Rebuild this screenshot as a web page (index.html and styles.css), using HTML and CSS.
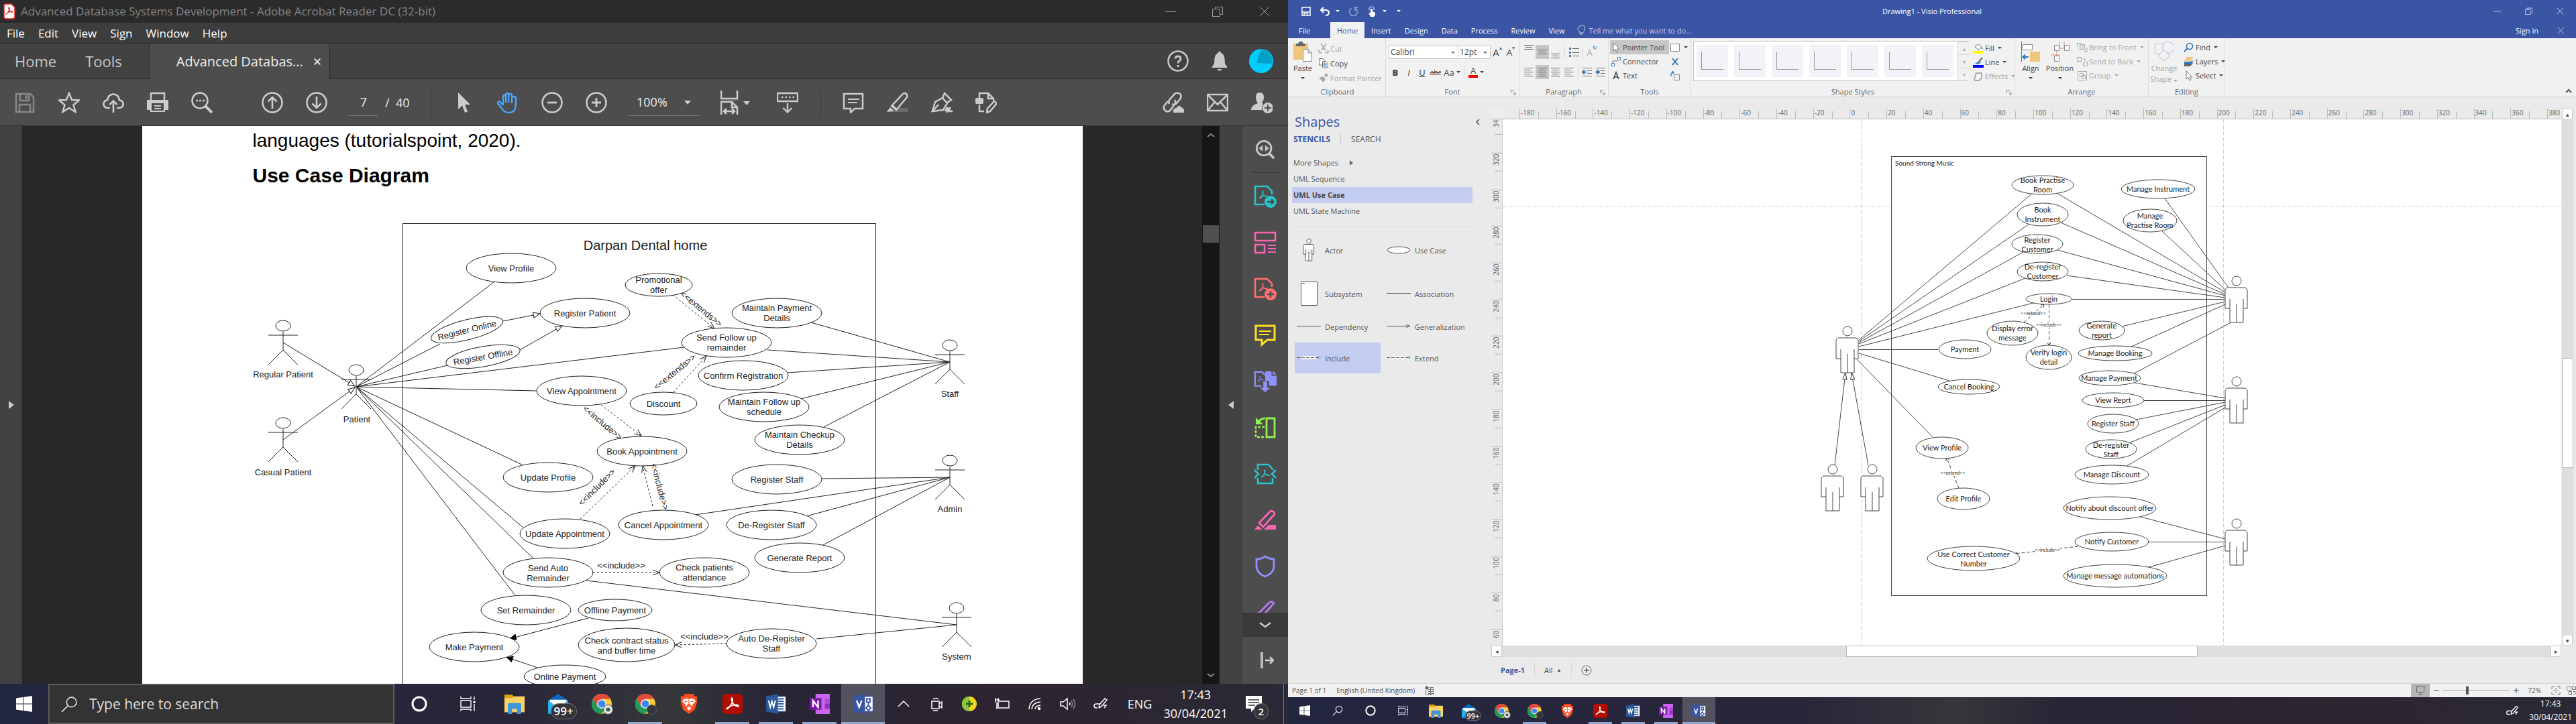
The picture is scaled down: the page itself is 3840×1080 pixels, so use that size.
FILE: index.html
```html
<!DOCTYPE html>
<html lang="en">
<head>
<meta charset="utf-8">
<title>Desktop</title>
<link rel="stylesheet" href="styles.css">
</head>
<body>
<svg class="sprite" aria-hidden="true">
  <defs>
    <marker id="open" viewBox="0 0 12 10" refX="11" refY="5" markerWidth="12" markerHeight="10" markerUnits="userSpaceOnUse" orient="auto"><path d="M1 1 11 5 1 9" fill="none" stroke="#222"/></marker>
    <marker id="hollow" viewBox="0 0 12 10" refX="11" refY="5" markerWidth="12" markerHeight="10" markerUnits="userSpaceOnUse" orient="auto"><path d="M1 1 11 5 1 9Z" fill="#fff" stroke="#222"/></marker>
    <marker id="solid" viewBox="0 0 12 10" refX="11" refY="5" markerWidth="12" markerHeight="10" markerUnits="userSpaceOnUse" orient="auto"><path d="M0 0 11 5 0 10Z" fill="#000"/></marker>
    <marker id="tri" viewBox="0 0 12 8" refX="11" refY="4" markerWidth="12" markerHeight="8" markerUnits="userSpaceOnUse" orient="auto"><path d="M1 1 11 4 1 7Z" fill="#fff" stroke="#333"/></marker>
    <marker id="dep" viewBox="0 0 6 6" refX="5" refY="3" markerWidth="6" markerHeight="6" markerUnits="userSpaceOnUse" orient="auto"><path d="M1 0 5 3 1 6" fill="none" stroke="#333"/></marker>
  </defs>
  <symbol id="stick" viewBox="-24 -9 48 68" overflow="visible"><ellipse rx="11" ry="8"/><path d="M0 9V36M-22 14H22M-22 58 0 36 22 58"/></symbol>
  <symbol id="person" viewBox="-17 -8 34 71" overflow="visible"><circle r="7"/><path d="M-10 41H-17V13L-14 10H13L16 13V41H10M-10 27V62H10V27M0 34V62"/></symbol>
  <symbol id="trefoil" viewBox="0 0 12 12"><path d="M1 10C3 8 6 6 6 2 6 0 4 1 5 3 6 6 8 8 11 8 12 7 9 6 5 8 3 9 2 11 1 10Z" fill="none" stroke="currentColor"/></symbol>
  <symbol id="i-win" viewBox="0 0 24 24"><path fill="#fff" d="M0 3.500 10 2V11.500H0ZM11 2 24 0V11.500H11ZM0 12.500H10V22L0 20.500ZM11 12.500H24V24L11 22Z"/></symbol>
  <symbol id="i-find" viewBox="0 0 24 24"><path fill="none" stroke="currentColor" stroke-width="1.600" d="M22 9A7 7 0 1 1 8 9 7 7 0 1 1 22 9ZM10 14 1 23"/></symbol>
  <symbol id="i-cortana" viewBox="0 0 24 24"><circle cx="12" cy="12" r="10" fill="none" stroke="#fff" stroke-width="3"/></symbol>
  <symbol id="i-task" viewBox="0 0 24 24"><path fill="none" stroke="#fff" stroke-width="1.400" d="M1 1V4H16V1M1 23V20H16V23M1 7H16V17H1ZM21 1V6M21 12V23"/><path fill="#fff" d="M19.500 8h3v3h-3z"/></symbol>
  <symbol id="i-folder" viewBox="0 0 24 24"><path fill="#e0a410" d="M0 1H9L11 3V7H0Z"/><path fill="#fbd263" d="M0 5H10L11 3H24V22H0Z"/><path fill="#3f96dc" d="M4 13Q4 11 6 11H18Q20 11 20 13V24H15V18H9V24H4Z"/></symbol>
  <symbol id="i-mail" viewBox="0 0 24 24"><path fill="#0a6cc0" d="M0 8 12 0 24 8V12H0Z"/><path fill="#fff" d="M2 7H22V14H2Z"/><path fill="#2bb0ee" d="M0 8 12 16 0 24ZM24 8 12 16 24 24Z"/><path fill="#1a8ddb" d="M0 24 12 15 24 24Z"/></symbol>
  <symbol id="i-chrome" viewBox="0 0 24 24"><circle cx="12" cy="12" r="12" fill="#fcc934"/><path fill="#e14b3d" d="M12 12V6H22.400A12 12 0 0 0 1.600 6L7 15Z"/><path fill="#1d9b57" d="M1.600 6A12 12 0 0 0 12 24L17 15 12 12 7 15Z"/><circle cx="12" cy="12" r="5.500" fill="#fff"/><circle cx="12" cy="12" r="4.400" fill="#4384f3"/></symbol>
  <symbol id="i-brave" viewBox="0 0 24 24"><path fill="#fb4b20" d="M7 0H17L19 3 22 3 21.500 7 22 9 19 19 12 24 5 19 2 9 2.500 7 2 3 5 3Z"/><path fill="#fff" d="M6 6 10 5.500 12 6.500 14 5.500 18 6 20 9 16 13 16.500 15 12 13 7.500 15 8 13 4 9Z"/><path fill="#fff" d="M12 15 15 17 12 20 9 17Z"/><path stroke="#fb4b20" fill="none" d="M6.500 9 10 9.500M17.500 9 14 9.500M12 7V12M10 12.500H14"/></symbol>
  <symbol id="i-acro" viewBox="0 0 24 24"><rect width="24" height="24" rx="4" fill="#b30b00"/><path fill="none" stroke="#fff" stroke-width="1.500" d="M5 18C8 17 13 10 12 6 11.500 4 10 5 11 8 12 12 15 15 19 15 20 13 15 12 9 15 6 16 4 18.500 5 18Z"/></symbol>
  <symbol id="i-word" viewBox="0 0 24 24"><path fill="#fff" stroke="#2b579a" d="M12 3H23.500V21H12Z"/><path stroke="#2b579a" stroke-width="1.500" d="M14 6H21M14 9H21M14 12H21M14 15H21M14 18H21"/><path fill="#2b579a" d="M0 3 14 0V24L0 21Z"/><path fill="none" stroke="#fff" stroke-width="1.600" d="M3 8 5 16 7 9 9 16 11 8"/></symbol>
  <symbol id="i-note" viewBox="0 0 24 24"><path fill="#ca64ea" d="M7 0H24V24H7Z"/><path fill="#ae4bd5" d="M18 6H24V12H18Z"/><path fill="#9332bf" d="M18 12H24V18H18Z"/><path fill="#7719aa" d="M0 5H14V19H0Z"/><path fill="none" stroke="#fff" stroke-width="1.800" d="M4 16V8L10 16V8"/></symbol>
  <symbol id="i-visio" viewBox="0 0 24 24"><path fill="#fff" stroke="#3955a3" d="M12 3H23.500V21H12Z"/><path fill="none" stroke="#3955a3" stroke-width="1.500" d="M16 6H20V10H16ZM18 10V14L15 17 18 20 21 17 18 14"/><path fill="#3955a3" d="M0 3 14 0V24L0 21Z"/><path fill="none" stroke="#fff" stroke-width="1.800" d="M4 8 7 16 10 8"/></symbol>
  <symbol id="i-pen" viewBox="0 0 24 24"><path fill="none" stroke="#fff" stroke-width="1.500" d="M9 18 10 13 18 4 21 6 13 16 9 18M10 12H5Q2 12 2 15 2 18 5 18H7M16 14H20L17 18"/></symbol>
  <symbol id="i-x" viewBox="0 0 16 16"><path fill="none" stroke="currentColor" d="M1 1 15 15M15 1 1 15"/></symbol>
  <symbol id="i-restore" viewBox="0 0 16 16"><path fill="none" stroke="currentColor" d="M.5 4.500H11.500V15.500H.5ZM4.500 4V1.500H15.500V12.500H12"/></symbol>
  <symbol id="i-min" viewBox="0 0 16 16"><path stroke="currentColor" d="M0 8.500H16"/></symbol>
  <symbol id="i-lines" viewBox="0 0 16 16"><path stroke="#777" d="M1 1.500H15M1 4.500H11M1 7.500H15M1 10.500H11M1 13.500H15"/></symbol>
  <symbol id="i-linesc" viewBox="0 0 16 16"><path stroke="#666" d="M1 1.500H15M3 4.500H13M1 7.500H15M3 10.500H13M1 13.500H15"/></symbol>
  <symbol id="i-three" viewBox="0 0 16 8"><path stroke="#666" d="M1 .5H15M3 3.500H13M1 6.500H15"/></symbol>
  <symbol id="i-pointer" viewBox="0 0 16 16"><path fill="#fff" stroke="#777" d="M4 1V13L7 10.500 9 15 11 14 9 10H13Z"/></symbol>
  <symbol id="i-launch" viewBox="0 0 8 8"><path fill="none" stroke="#888" d="M.5 5V.5H5M3 3 7 7M7 4V7H4"/></symbol>
</svg>

<section class="screen acro">
  <header class="a-title">
    <svg class="a-logo" viewBox="0 0 18 24"><path d="M3 1H12L17 6V20Q17 23 14 23H4Q1 23 1 20V3Q1 1 3 1Z" fill="#fff" stroke="#e1251b" stroke-width="1.500"/><path fill="none" stroke="#e1251b" stroke-width="1.300" d="M4 16C6 15 10 10 9 7 8 5 7 7 8.500 9.500 10 12 12 13.500 14 13 14 12 10 11.500 6.500 14 5 15 4 17 4 16Z"/></svg>
    <h1>Advanced Database Systems Development - Adobe Acrobat Reader DC (32-bit)</h1>
    <div class="a-win"><button aria-label="Minimise"><svg><use href="#i-min"/></svg></button><button aria-label="Restore"><svg><use href="#i-restore"/></svg></button><button aria-label="Close"><svg><use href="#i-x"/></svg></button></div>
  </header>
  <nav class="a-menu"><button>File</button><button>Edit</button><button>View</button><button>Sign</button><button>Window</button><button>Help</button></nav>
  <div class="a-tabs">
    <button>Home</button><button>Tools</button>
    <div class="a-tab"><button>Advanced Databas...</button><button aria-label="Close tab"><svg class="tab-x"><use href="#i-x"/></svg></button></div>
    <div class="a-account">
      <button aria-label="Help"><svg viewBox="0 0 32 32"><circle cx="16" cy="16" r="14.500" fill="none" stroke="currentColor" stroke-width="2.500"/><path fill="none" stroke="currentColor" stroke-width="2.800" d="M12 12.500Q12 9 16 9T20 12.500Q20 15 17 16.500 16 17 16 19.500M16 22V25"/></svg></button>
      <button aria-label="Notifications"><svg viewBox="0 0 32 32"><path fill="currentColor" d="M14 2H18V4Q23 6 23.500 12L24 20 28 26H4L8 20 8.500 12Q9 6 14 4ZM12 28H20L16 31Z"/></svg></button>
      <button aria-label="Account"><svg class="avatar" viewBox="0 0 36 36"><circle cx="18" cy="18" r="18" fill="#00cdff"/><path fill="#00a0c8" d="M18 0A18 18 0 0 1 34 22L11 21Z"/></svg></button>
    </div>
  </div>
  <div class="a-tools">
    <button aria-label="Save" disabled><svg viewBox="0 0 32 32"><path fill="none" stroke="#888" stroke-width="2.500" d="M3 3H24L29 8V30H3ZM9 3V13H22V3M8 30V19H24V30M18 5V11"/></svg></button>
    <button aria-label="Star"><svg viewBox="0 0 32 32"><path fill="none" stroke="currentColor" stroke-width="2.500" d="M16 2 20 12 31 12.500 22.500 19.500 25.500 30 16 24 6.500 30 9.500 19.500 1 12.500 12 12Z"/></svg></button>
    <button aria-label="Upload"><svg viewBox="0 0 32 32"><path fill="none" stroke="currentColor" stroke-width="2.600" d="M11 24H7Q1 23 1.500 17.500 2 13 7 12.500 8 4 16 3.500 24 4 25 12.500 30 13 30.500 17.500 31 23 25 24H21M16 31V14M10.500 19 16 13.500 21.500 19"/></svg></button>
    <button aria-label="Print"><svg viewBox="0 0 32 32"><path fill="none" stroke="currentColor" stroke-width="2.500" d="M6 12V2H26V12"/><path fill="currentColor" d="M0 12H32V27H27V30H5V27H0Z"/><path fill="#4d4d4d" d="M7 17H25V28H7Z"/><path stroke="currentColor" stroke-width="2" d="M11 21H21M11 25H21"/></svg></button>
    <button aria-label="Find"><svg viewBox="0 0 32 32"><circle cx="13" cy="13" r="11.500" fill="none" stroke="currentColor" stroke-width="2.500"/><path stroke="currentColor" stroke-width="4" d="M21 21 31 31"/><path stroke="currentColor" stroke-width="2.500" d="M7 13H10M12 13H15M17 13H20"/></svg></button>
    <button class="gap-l" aria-label="Previous page"><svg viewBox="0 0 32 32"><circle cx="16" cy="16" r="14.500" fill="none" stroke="currentColor" stroke-width="2.500"/><path fill="none" stroke="currentColor" stroke-width="2.600" d="M16 25V8M9.500 14.500 16 8 22.500 14.500"/></svg></button>
    <button aria-label="Next page"><svg viewBox="0 0 32 32"><circle cx="16" cy="16" r="14.500" fill="none" stroke="currentColor" stroke-width="2.500"/><path fill="none" stroke="currentColor" stroke-width="2.600" d="M16 7V24M9.500 17.500 16 24 22.500 17.500"/></svg></button>
    <label class="pageno"><input value="7" aria-label="Page number"><span>/&nbsp; 40</span></label>
    <i class="a-sep"></i>
    <button aria-label="Select"><svg viewBox="0 0 32 32"><path fill="currentColor" d="M8 1V26L14 20.500 18 31 22 29.500 18 19H26Z"/></svg></button>
    <button aria-label="Hand" class="hand"><svg viewBox="0 0 32 32"><path fill="none" stroke="currentColor" stroke-width="2.400" d="M9 20V7Q9 5 11 5T13 7V16 4Q13 2 15 2T17 4V16 5Q17 3 19.500 3T22 5V17 9Q22 7 25 7T28 9V18Q28 31 18 31 11 31 8 26L1 17Q1 14 4 14.500L9 20"/></svg></button>
    <button aria-label="Zoom out"><svg viewBox="0 0 32 32"><circle cx="16" cy="16" r="14.500" fill="none" stroke="currentColor" stroke-width="2.500"/><path stroke="currentColor" stroke-width="2.800" d="M9 16H23"/></svg></button>
    <button aria-label="Zoom in"><svg viewBox="0 0 32 32"><circle cx="16" cy="16" r="14.500" fill="none" stroke="currentColor" stroke-width="2.500"/><path stroke="currentColor" stroke-width="2.800" d="M9 16H23M16 9V23"/></svg></button>
    <label class="zoom"><select aria-label="Zoom"><option>100%</option></select></label>
    <button class="fitw" aria-label="Fit width"><svg viewBox="0 0 44 36"><path fill="none" stroke="currentColor" stroke-width="2.600" d="M1 0V12H25V0M1 36V17H17L25 25V36M17 17V25H25M5 31H21M9 27 5 31 9 35M17 27 21 31 17 35"/><path stroke="#777" stroke-width="2" d="M0 14H26"/><path fill="currentColor" d="M34 16H44L39 22Z"/></svg></button>
    <button class="scrollm" aria-label="Scroll"><svg viewBox="0 0 32 32"><path fill="none" stroke="currentColor" stroke-width="2.400" d="M1 2H31V14H1ZM16 17V30M9.500 24 16 30.500 22.500 24"/><path stroke="currentColor" stroke-width="2.500" stroke-dasharray="2.500 3" d="M7 8H26"/></svg></button>
    <i class="a-sep"></i>
    <button aria-label="Comment"><svg viewBox="0 0 32 32"><path fill="none" stroke="currentColor" stroke-width="2.500" d="M2 3H30V25H18L12 31V25H2Z"/><path stroke="currentColor" stroke-width="2" d="M8 11H25M8 16H22"/></svg></button>
    <button aria-label="Highlight"><svg viewBox="0 0 32 32"><path fill="#6b6b6b" d="M8 30 16 24H32V30Z"/><path fill="none" stroke="currentColor" stroke-width="2.500" d="M7 21 24 3Q27 1 29 3T30 8L14 27ZM8 20 15 27"/><path fill="currentColor" d="M5 23 11 29 0 30Z"/></svg></button>
    <button aria-label="Sign"><svg viewBox="0 0 32 32"><path fill="none" stroke="currentColor" stroke-width="2.500" d="M2 29 6 15 17 9 24 17 18 27 2 29 11 19M17 9 20 2 30 12 24 16M21 29 24 23 24 29 28 23 27 29H32"/></svg></button>
    <button aria-label="Edit"><svg viewBox="0 0 32 32"><path fill="none" stroke="currentColor" stroke-width="2.500" d="M6 9V2H19L27 10V13M19 2V10H27M6 19V29H13M17 31 18 25 28 14 32 17 22 29Z"/><rect y="9" width="12" height="9" rx="2" fill="currentColor"/></svg></button>
    <span class="push"></span>
    <button aria-label="Share link"><svg viewBox="0 0 32 32"><path fill="none" stroke="currentColor" stroke-width="2.600" d="M10 18Q8 14 11 11L18 3Q22 0 26 3 29 7 26 11L20 18Q17 20 14 18M18 12Q21 16 17 20L12 27Q8 31 4 28 0 24 3 20L8 14"/><path fill="currentColor" d="M16 31V28Q17 24 21 24 24 18 28 23 33 25 33 31Z"/></svg></button>
    <button aria-label="Email"><svg viewBox="0 0 32 32"><path fill="none" stroke="currentColor" stroke-width="2.500" d="M1 4H31V28H1ZM1 4 16 19 31 4M1 28 12 15M31 28 20 15"/></svg></button>
    <button aria-label="Invite"><svg viewBox="0 0 32 32"><path fill="currentColor" d="M13 1Q19 1 19 8 19 13 16 16 20 19 19 27H0Q0 20 10 17 7 13 7 8 7 1 13 1Z"/><circle cx="25" cy="24" r="8.500" fill="currentColor" stroke="#4d4d4d"/><path stroke="#4d4d4d" stroke-width="2" d="M20 24H30M25 19V29"/></svg></button>
  </div>
  <div class="a-body">
    <button class="strip" aria-label="Show navigation pane"><svg viewBox="0 0 8 12"><path d="M0 0 8 6 0 12Z" fill="#ccc"/></svg></button>
    <main class="doc">
      <article class="paper">
        <p>languages (tutorialspoint, 2020).</p>
        <h2>Use Case Diagram</h2>
        <svg class="uml left" viewBox="360 313 1120 707">
          <rect class="n" x="600.500" y="333.500" width="705" height="720"/>
          <g class="n">
            <path d="M531 577 736 421M531 577 656 513M531 577 667 545M531 577 1020 518M531 577 800 583M531 577 778 693M531 577 780 787M531 577 795 833M531 577 767 887"/>
            <path d="M874 866 1426 932 1217 953M1209 481 1416 540 1144 522M1173 556 1416 540 1193 595M1416 540 1228 637M1225 714 1416 712 1036 768M1202 770 1416 712 1227 813"/>
            <path marker-end="url(#hollow)" d="M422 511 529 576"/><path marker-end="url(#hollow)" d="M422 656 529 578"/>
            <path marker-end="url(#hollow)" d="M750 479 805 468"/><path marker-end="url(#hollow)" d="M775 522 838 486"/>
            <path marker-end="url(#solid)" d="M877 922 759 953"/><path marker-end="url(#solid)" d="M804 997 754 980"/>
            <g class="dash">
              <path marker-end="url(#open)" d="M1003 440 1065 490"/><path marker-end="url(#open)" d="M1004 585 1053 531"/>
              <path marker-end="url(#open)" d="M896 604 956 650"/><path marker-end="url(#open)" d="M865 774 947 695"/>
              <path marker-end="url(#open)" d="M973 755 958 695"/><path marker-end="url(#open)" d="M884 854H983"/>
              <path marker-end="url(#open)" d="M1083 960 1006 962"/>
            </g>
          </g>
          <g class="o">
            <ellipse cx="762" cy="400" rx="67" ry="22"/><ellipse cx="872" cy="467" rx="67" ry="22"/>
            <ellipse cx="696" cy="492" rx="55" ry="15" transform="rotate(-14 696 492)"/><ellipse cx="720" cy="532" rx="56" ry="15" transform="rotate(-10 720 532)"/>
            <ellipse cx="867" cy="583" rx="67" ry="22"/><ellipse cx="817" cy="712" rx="67" ry="22"/><ellipse cx="842" cy="796" rx="67" ry="22"/>
            <ellipse cx="817" cy="854" rx="67" ry="22"/><ellipse cx="784" cy="910" rx="67" ry="22"/><ellipse cx="917" cy="910" rx="55" ry="16"/>
            <ellipse cx="707" cy="965" rx="67" ry="22"/><ellipse cx="842" cy="1009" rx="61" ry="17"/><ellipse cx="934" cy="962" rx="72" ry="25"/>
            <ellipse cx="982" cy="425" rx="50" ry="17"/><ellipse cx="1158" cy="467" rx="67" ry="22"/><ellipse cx="1083" cy="511" rx="67" ry="22"/>
            <ellipse cx="1108" cy="560" rx="67" ry="22"/><ellipse cx="989" cy="602" rx="50" ry="17"/><ellipse cx="1139" cy="607" rx="67" ry="22"/>
            <ellipse cx="1192" cy="656" rx="67" ry="22"/><ellipse cx="957" cy="673" rx="67" ry="22"/><ellipse cx="1158" cy="715" rx="67" ry="22"/>
            <ellipse cx="989" cy="783" rx="67" ry="22"/><ellipse cx="1150" cy="783" rx="67" ry="22"/><ellipse cx="1192" cy="832" rx="67" ry="22"/>
            <ellipse cx="1050" cy="854" rx="67" ry="22"/><ellipse cx="1150" cy="960" rx="67" ry="22"/>
          </g>
          <g class="n">
            <use href="#stick" x="398" y="477" width="48" height="68"/><use href="#stick" x="507" y="543" width="48" height="68"/><use href="#stick" x="398" y="622" width="48" height="68"/>
            <use href="#stick" x="1392" y="506" width="48" height="68"/><use href="#stick" x="1392" y="678" width="48" height="68"/><use href="#stick" x="1402" y="898" width="48" height="68"/>
          </g>
          <text class="big" x="962" y="373">Darpan Dental home</text>
          <text x="762" y="405">View Profile</text><text x="872" y="472">Register Patient</text>
          <text x="696" y="497" transform="rotate(-14 696 492)">Register Online</text><text x="720" y="537" transform="rotate(-10 720 532)">Register Offline</text>
          <text x="867" y="588">View Appointment</text><text x="817" y="717">Update Profile</text><text x="842" y="801">Update Appointment</text>
          <text x="817" y="852">Send Auto<tspan x="817" dy="15">Remainder</tspan></text><text x="784" y="915">Set Remainder</text>
          <text x="917" y="915">Offline Payment</text><text x="707" y="970">Make Payment</text><text x="842" y="1014">Online Payment</text>
          <text x="934" y="960">Check contract status<tspan x="934" dy="15">and buffer time</tspan></text>
          <text x="982" y="422">Promotional<tspan x="982" dy="15">offer</tspan></text><text x="1158" y="464">Maintain Payment<tspan x="1158" dy="15">Details</tspan></text>
          <text x="1083" y="508">Send Follow up<tspan x="1083" dy="15">remainder</tspan></text><text x="1108" y="565">Confirm Registration</text>
          <text x="989" y="607">Discount</text><text x="1139" y="604">Maintain Follow up<tspan x="1139" dy="15">schedule</tspan></text>
          <text x="1192" y="653">Maintain Checkup<tspan x="1192" dy="15">Details</tspan></text><text x="957" y="678">Book Appointment</text>
          <text x="1158" y="720">Register Staff</text><text x="989" y="788">Cancel Appointment</text><text x="1150" y="788">De-Register Staff</text>
          <text x="1192" y="837">Generate Report</text><text x="1050" y="851">Check patients<tspan x="1050" dy="15">attendance</tspan></text>
          <text x="1150" y="957">Auto De-Register<tspan x="1150" dy="15">Staff</tspan></text>
          <text x="1045" y="465" transform="rotate(39 1045 461)">&lt;&lt;extends&gt;&gt;</text><text x="1006" y="559" transform="rotate(-39 1006 555)">&lt;&lt;extends&gt;&gt;</text>
          <text x="898" y="635" transform="rotate(40 898 631)">&lt;&lt;include&gt;&gt;</text><text x="890" y="731" transform="rotate(-45 890 727)">&lt;&lt;include&gt;&gt;</text>
          <text x="983" y="730" transform="rotate(75 983 726)">&lt;&lt;include&gt;&gt;</text><text x="926" y="848">&lt;&lt;include&gt;&gt;</text><text x="1050" y="954">&lt;&lt;include&gt;&gt;</text>
          <text x="422" y="563">Regular Patient</text><text x="532" y="630">Patient</text><text x="422" y="709">Casual Patient</text>
          <text x="1416" y="592">Staff</text><text x="1416" y="764">Admin</text><text x="1426" y="984">System</text>
        </svg>
      </article>
      <div class="a-scroll"><svg viewBox="0 0 12 6"><path d="M1 5 6 1 11 5"/></svg><i></i><svg viewBox="0 0 12 6"><path d="M1 1 6 5 11 1"/></svg></div>
    </main>
    <button class="strip" aria-label="Hide tools pane"><svg viewBox="0 0 8 12"><path d="M8 0 0 6 8 12Z" fill="#ccc"/></svg></button>
    <aside class="a-pane">
      <button aria-label="Search tools"><svg viewBox="0 0 32 32"><circle cx="14" cy="14" r="11.500" fill="none" stroke="currentColor" stroke-width="3"/><path stroke="currentColor" stroke-width="4" d="M22 22 30 30"/><path fill="currentColor" d="M12 9V19L6 14ZM16 9V19L22 14Z"/></svg></button>
      <i class="p-sep"></i>
      <button class="teal" aria-label="Export PDF"><svg viewBox="0 0 34 34"><path fill="none" stroke="currentColor" stroke-width="2.600" d="M16 29H2V2H20L27 9V14"/><use href="#trefoil" x="7" y="8" width="14" height="14"/><circle cx="25" cy="25" r="9" fill="currentColor"/><path fill="none" stroke="#4d4d4d" stroke-width="2.500" d="M20 25H29M26 21.500 29.500 25 26 28.500"/></svg></button>
      <button class="pink" aria-label="Organise pages"><svg viewBox="0 0 34 34"><path fill="none" stroke="currentColor" stroke-width="2.600" d="M2 2H32V14H2ZM2 20H16V32H2Z"/><path stroke="currentColor" stroke-width="1.800" d="M21 21H33M21 26H33M21 31H33"/></svg></button>
      <button class="coral" aria-label="Create PDF"><svg viewBox="0 0 34 34"><path fill="none" stroke="currentColor" stroke-width="2.600" d="M16 29H2V2H20L27 9V14"/><use href="#trefoil" x="7" y="8" width="14" height="14"/><circle cx="25" cy="25" r="9" fill="currentColor"/><path stroke="#4d4d4d" stroke-width="2.500" d="M20 25H30M25 20V30"/></svg></button>
      <button class="yellow" aria-label="Comment"><svg viewBox="0 0 34 34"><path fill="none" stroke="currentColor" stroke-width="3" d="M3 3H31V24H20L12 31V24H3Z"/><path stroke="currentColor" stroke-width="2" d="M8 11H26M8 16H23"/></svg></button>
      <button class="violet" aria-label="Combine files"><svg viewBox="0 0 36 34"><path fill="none" stroke="currentColor" stroke-width="2.500" d="M12 24H2V2H13L18 7"/><use href="#trefoil" x="5" y="7" width="11" height="12"/><path fill="currentColor" d="M18 1H28V8H36V24H24V16H18ZM30 0 36 6H30ZM15 17H21V27H26L18 34 10 27H15Z"/></svg></button>
      <button class="lime" aria-label="Rotate"><svg viewBox="0 0 34 34"><path fill="none" stroke="currentColor" stroke-width="2.800" d="M19 3H31V31H19ZM17 3Q10 3 7 9"/><path fill="currentColor" d="M3 2V12H14Z"/><path fill="none" stroke="currentColor" stroke-width="2.500" stroke-dasharray="4 2" d="M16 16H3V31H16"/></svg></button>
      <button class="teal" aria-label="Compress"><svg viewBox="0 0 34 34"><path fill="none" stroke="currentColor" stroke-width="2.600" d="M6 11V3H22L28 10V11M6 23V31H28V23M1 11 7 17 1 23M33 11 27 17 33 23"/><use href="#trefoil" x="10" y="10" width="14" height="14"/></svg></button>
      <button class="pink" aria-label="Redact"><svg viewBox="0 0 34 34"><path fill="none" stroke="currentColor" stroke-width="2.800" d="M8 21 24 4Q27 2 30 5 32 8 29 10L14 27Z"/><path fill="currentColor" d="M1 31 6 25 13 31ZM15 31 22 24H33V31Z"/></svg></button>
      <button class="violet" aria-label="Protect"><svg viewBox="0 0 34 34"><path fill="none" stroke="currentColor" stroke-width="2.800" d="M17 2Q23 6 30 6V16Q30 27 17 32 4 27 4 16V6Q11 6 17 2Z"/></svg></button>
      <button class="cut" aria-label="Fill and sign"><svg viewBox="0 0 34 34"><path fill="none" stroke="currentColor" stroke-width="2.800" d="M6 22 24 4Q27 2 30 6L12 26Z"/></svg></button>
      <button class="p-more" aria-label="More tools"><svg viewBox="0 0 18 10"><path fill="none" stroke="#ccc" stroke-width="2.500" d="M1 2 9 8 17 2"/></svg></button>
      <button class="p-end" aria-label="Collapse"><svg viewBox="0 0 20 24"><path stroke="#bbb" stroke-width="4" d="M2 0V24"/><path fill="none" stroke="#ccc" stroke-width="2.500" d="M7 12H19M14 7 19 12 14 17"/></svg></button>
    </aside>
  </div>
  <footer class="bar big-bar">
    <button class="start" aria-label="Start"><svg><use href="#i-win"/></svg></button>
    <label class="search"><svg><use href="#i-find"/></svg><input placeholder="Type here to search"></label>
    <button class="sys" aria-label="Cortana"><svg><use href="#i-cortana"/></svg></button>
    <button class="sys" aria-label="Task view"><svg><use href="#i-task"/></svg></button>
    <button aria-label="Files"><svg><use href="#i-folder"/></svg></button>
    <button aria-label="Mail"><svg><use href="#i-mail"/></svg><b class="badge">99+</b></button>
    <button aria-label="Chrome"><svg><use href="#i-chrome"/></svg><i class="face light"></i></button>
    <button class="run" aria-label="Chrome profile"><svg><use href="#i-chrome"/></svg><i class="face"></i></button>
    <button aria-label="Brave"><svg><use href="#i-brave"/></svg></button>
    <button class="run" aria-label="Acrobat"><svg><use href="#i-acro"/></svg></button>
    <button class="run" aria-label="Word"><svg><use href="#i-word"/></svg></button>
    <button class="run" aria-label="OneNote"><svg><use href="#i-note"/></svg></button>
    <button class="run active" aria-label="Visio"><svg><use href="#i-visio"/></svg></button>
    <span class="push"></span>
    <div class="tray">
      <button aria-label="Hidden icons"><svg viewBox="0 0 24 24"><path d="M4 16 12 8 20 16"/></svg></button>
      <button aria-label="Meet now"><svg viewBox="0 0 24 24"><path d="M5 8H16V19H5ZM16 12 20 9V18L16 15M7 5Q11 2 15 5M7 22H14"/></svg></button>
      <button aria-label="Security"><svg viewBox="0 0 24 24"><circle cx="12" cy="12" r="11" fill="#f7d51d" stroke="none"/><path d="M12 1A11 11 0 0 0 12 23Z" fill="#8cc63a" stroke="none"/><path d="M12 7V17M7 12H17" stroke="#1e6b1e" stroke-width="3"/></svg></button>
      <button aria-label="Battery"><svg viewBox="0 0 24 24"><path d="M6 8H22V18H6ZM2 3V10M6 3V10M1 6H8M4 10V20"/></svg></button>
      <button aria-label="Wi-Fi"><svg viewBox="0 0 24 24"><path d="M3 20Q4 5 20 4M7 20Q8 10 20 9M12 20Q12 15 20 14"/><circle cx="18" cy="19" r="1.500" fill="#fff"/></svg></button>
      <button aria-label="Volume"><svg viewBox="0 0 24 24"><path d="M1 9H5L11 4V20L5 15H1ZM14 10Q16 12 14 14"/><path stroke="#888" d="M17 7Q20 12 17 17M20 5Q25 12 20 19"/></svg></button>
      <button aria-label="Pen"><svg><use href="#i-pen"/></svg></button>
    </div>
    <span class="lang">ENG</span>
    <time class="clock">17:43<br>30/04/2021</time>
    <button class="notif" aria-label="Notifications"><svg viewBox="0 0 26 26"><path fill="#fff" d="M1 1H25V20H14L9 25V20H1Z"/><path stroke="#333" stroke-width="1.500" d="M5 7H21M5 11H21M5 15H15"/></svg><b class="badge">2</b></button>
  </footer>
</section>

<section class="screen visio">
  <header class="v-head">
    <div class="v-title">
      <div class="qat">
        <button aria-label="Save"><svg viewBox="0 0 16 16"><path fill="none" stroke="#fff" stroke-width="1.500" d="M2 2H14V14H2ZM2 9H14M5 14V11H10V14"/></svg></button>
        <button aria-label="Undo"><svg viewBox="0 0 16 16"><path fill="none" stroke="#fff" stroke-width="2" d="M6 2 2 6 6 10M2 6H9Q14 6 14 10T9 14"/></svg><i class="car"></i></button>
        <button aria-label="Redo"><svg viewBox="0 0 16 16" opacity=".4"><path fill="none" stroke="#fff" stroke-width="1.800" d="M6 3A6 6 0 1 0 11 3M11 7V2H15"/></svg></button>
        <button aria-label="Touch mode"><svg viewBox="0 0 16 16"><path fill="#fff" d="M6 4H9V8L13 10V13L11 16H6L3 10 6 11Z"/><path fill="none" stroke="#fff" d="M4 6Q3 1 7.500 1T11 6"/></svg><i class="car"></i></button>
        <button aria-label="Customise"><i class="car"></i></button>
      </div>
      <h1>Drawing1 - Visio Professional</h1>
      <div class="v-win"><button aria-label="Minimise"><svg><use href="#i-min"/></svg></button><button aria-label="Restore"><svg><use href="#i-restore"/></svg></button><button aria-label="Close"><svg><use href="#i-x"/></svg></button></div>
    </div>
    <nav class="v-tabs">
      <button class="file">File</button><button class="cur">Home</button><button>Insert</button><button>Design</button><button>Data</button><button>Process</button><button>Review</button><button>View</button>
      <label class="tell"><svg viewBox="0 0 12 16"><path fill="none" stroke="#c5cfee" d="M4 11Q1 8 1 5.500T6 1 11 5.500 8 11V14H4ZM4 12H8"/></svg><input placeholder="Tell me what you want to do..."></label>
      <button class="signin">Sign in</button><button class="docx" aria-label="Close document"><svg><use href="#i-x"/></svg></button>
    </nav>
  </header>
  <div class="ribbon">
    <section class="g clip"><div class="in">
      <button class="tall"><svg viewBox="0 0 28 30"><path fill="#eec77c" d="M0 3H22V27H0Z"/><path fill="#666" d="M4 3H7L9 0H13L15 3H18V7H4Z"/><path fill="#fff" stroke="#888" d="M14.500 11.500H22L27.500 17V29.500H14.500ZM22 12V17H27"/></svg>Paste<i class="car"></i></button>
      <div class="stack"><button class="off"><svg viewBox="0 0 16 16"><path fill="none" stroke="#aaa" stroke-width="1.500" d="M4 1 11 11M12 1 5 11M5 13A2 2 0 1 1 3 11M11 13A2 2 0 1 0 13 11"/></svg>Cut</button><button><svg viewBox="0 0 16 16"><path fill="#fff" stroke="#777" d="M1.500 1.500H7L9 4V11H1.500ZM6.500 5.500H12L14.500 8V15H6.500Z"/><path stroke="#3f7fbf" d="M8 9H13M8 11H13M8 13H13"/></svg>Copy</button><button class="off"><svg viewBox="0 0 16 16"><path fill="#aaa" d="M1 8 7 6 11 10 8 15ZM9 4 12 1 15 4 12 8Z"/></svg>Format Painter</button></div>
    </div><h3>Clipboard</h3></section>
    <section class="g font"><div class="in col">
      <div class="row"><label class="sel face-sel"><select aria-label="Font"><option>Calibri</option></select></label><label class="sel size-sel"><select aria-label="Font size"><option>12pt</option></select></label><button class="sq gl">A<sup>▴</sup></button><button class="sq">A<sup>▾</sup></button></div>
      <div class="row fmt"><button class="sq"><b>B</b></button><button class="sq ital">I</button><button class="sq und">U</button><button class="sq strike">abc</button><button class="sq wd">Aa<i class="car"></i></button><i class="bar-v"></i><button class="sq wd"><span class="red">A</span><i class="car"></i></button></div>
    </div><h3>Font<svg class="launch"><use href="#i-launch"/></svg></h3></section>
    <section class="g para"><div class="in col">
      <div class="row"><button class="sq top" aria-label="Top"><svg class="half"><use href="#i-three"/></svg></button><button class="sq on" aria-label="Middle"><svg class="half"><use href="#i-three"/></svg></button><button class="sq bot" aria-label="Bottom"><svg class="half"><use href="#i-three"/></svg></button><i class="bar-v"></i><button class="sq" aria-label="Bullets"><svg viewBox="0 0 16 16"><path stroke="#666" d="M6 2.500H16M6 8.500H16M6 13.500H16"/><path fill="#3f7fbf" d="M1 1H4V4H1ZM1 7H4V10H1ZM1 12H4V15H1Z"/></svg></button><i class="bar-v"></i><button class="sq off">A<sup>↻</sup></button></div>
      <div class="row"><button class="sq" aria-label="Left"><svg><use href="#i-lines"/></svg></button><button class="sq on" aria-label="Centre"><svg><use href="#i-linesc"/></svg></button><button class="sq" aria-label="Right"><svg><use href="#i-linesc"/></svg></button><button class="sq" aria-label="Justify"><svg><use href="#i-lines"/></svg></button><i class="bar-v"></i><button class="sq" aria-label="Decrease indent"><svg viewBox="0 0 16 16"><path stroke="#777" d="M1 1.500H15M8 5.500H15M8 9.500H15M1 13.500H15"/><path fill="none" stroke="#2f74b5" stroke-width="2" d="M7 7.500H1M4 4.500 1 7.500 4 10.500"/></svg></button><button class="sq" aria-label="Increase indent"><svg viewBox="0 0 16 16"><path stroke="#777" d="M1 1.500H15M8 5.500H15M8 9.500H15M1 13.500H15"/><path fill="none" stroke="#2f74b5" stroke-width="2" d="M0 7.500H6M3 4.500 6 7.500 3 10.500"/></svg></button></div>
    </div><h3>Paragraph<svg class="launch"><use href="#i-launch"/></svg></h3></section>
    <section class="g tools"><div class="in">
      <div class="stack"><button class="on"><svg><use href="#i-pointer"/></svg>Pointer Tool</button><button><svg viewBox="0 0 16 16"><path fill="none" stroke="#777" d="M3 10V7H11"/><path fill="#fff" stroke="#3f7fbf" d="M1.500 10.500H5.500V14.500H1.500ZM10.500 1.500H14.500V5.500H10.500Z"/></svg>Connector</button><button><svg viewBox="0 0 16 16"><path fill="none" stroke="#444" stroke-width="1.600" d="M4 13 8 3 12 13M5.500 10H10.500"/></svg>Text</button></div>
      <div class="stack"><button aria-label="Rectangle"><svg viewBox="0 0 16 16"><path fill="#fff" stroke="#888" d="M1.500 2.500H14.500V13.500H1.500Z"/></svg><i class="car"></i></button><button aria-label="Connection point"><svg viewBox="0 0 16 16"><path stroke="#2f74b5" stroke-width="2" d="M4 3 12 13M12 3 4 13"/></svg></button><button aria-label="Text block"><svg viewBox="0 0 16 16"><path fill="none" stroke="#888" d="M6.500 6.500H14.500V14.500H6.500Z"/><path fill="none" stroke="#3f7fbf" stroke-width="1.500" d="M2 9Q1 3 6 3M4 1 6 3 4 5"/></svg></button></div>
    </div><h3>Tools</h3></section>
    <section class="g styles"><div class="in">
      <div class="gallery"><button aria-label="Style 1"></button><button aria-label="Style 2"></button><button aria-label="Style 3"></button><button aria-label="Style 4"></button><button aria-label="Style 5"></button><button aria-label="Style 6"></button><button aria-label="Style 7"></button><div class="gs"><i>▴</i><i>▾</i><i>▾</i></div></div>
      <div class="stack"><button><svg viewBox="0 0 16 16"><path fill="#fff" stroke="#777" d="M3 6 8 2 13 6 8 10Z"/><path fill="#3f7fbf" d="M12 5 15 9H13Z"/><path fill="#ff0" d="M0 12H16V16H0Z"/></svg>Fill<i class="car"></i></button><button><svg viewBox="0 0 16 16"><path fill="#3f7fbf" d="M3 10 9 6 12 8 8 11Z"/><path stroke="#666" stroke-width="2" d="M9 7 14 1"/><path fill="#00f" d="M0 12H16V16H0Z"/></svg>Line<i class="car"></i></button><button class="off"><svg viewBox="0 0 16 16"><path fill="#f5f5f5" stroke="#aaa" stroke-width="2" d="M2 12 5 3H13V10L9 14H3Z"/></svg>Effects<i class="car"></i></button></div>
    </div><h3>Shape Styles<svg class="launch"><use href="#i-launch"/></svg></h3></section>
    <section class="g arr"><div class="in">
      <button class="tall"><svg viewBox="0 0 28 30"><path stroke="#777" d="M.5 0V30"/><path fill="#fff" stroke="#888" d="M2.500 4.500H16.500V12.500H2.500Z"/><path fill="#eec77c" d="M13 15H28V30H13Z"/><path fill="none" stroke="#2f74b5" stroke-width="2" d="M11 23H3M6 19.500 2.500 23 6 26.500"/></svg>Align<i class="car"></i></button>
      <button class="tall pos"><svg viewBox="0 0 28 30"><path stroke="#e08b78" d="M13 0V10M20 0V10M9 10H24M0 20H14M9 14V22"/><path fill="#fff" stroke="#888" d="M5.500 5.500H12.500V13.500H5.500ZM20.500 5.500H27.500V13.500H20.500ZM5.500 21.500H12.500V29.500H5.500Z"/></svg>Position<i class="car"></i></button>
      <div class="stack"><button class="off"><svg viewBox="0 0 16 16"><path fill="#ddd" stroke="#aaa" d="M.5 1V7M.5 1.500H6M4.500 3.500H11.500V10.500H4.500ZM15 8V14.500H10"/></svg>Bring to Front<i class="car"></i></button><button class="off"><svg viewBox="0 0 16 16"><path fill="#eee" stroke="#aaa" d="M.5 1.500H6.500V7.500H.5ZM9.500 8.500H15.500V14.500H9.500ZM9 4H12V7"/></svg>Send to Back<i class="car"></i></button><button class="off"><svg viewBox="0 0 16 16"><path fill="none" stroke="#aaa" d="M1.500 1.500H14.500V14.500H1.500ZM4.500 4.500H9.500V9.500H4.500ZM7.500 7.500H12.500V12.500H7.500Z"/></svg>Group<i class="car"></i></button></div>
    </div><h3>Arrange</h3></section>
    <section class="g edit"><div class="in">
      <button class="tall off"><svg viewBox="0 0 28 30"><path fill="#f4f1f8" stroke="#bbb" d="M.5 3.500H14.500V18.500H.5Z"/><circle cx="20" cy="9" r="8.500" fill="#f4f1f8" stroke="#bbb"/><path fill="#f4f1f8" stroke="#bbb" d="M14 12 22 21 14 29.500 6 21Z"/></svg>Change<span>Shape<i class="car"></i></span></button>
      <div class="stack"><button><svg viewBox="0 0 16 16"><circle cx="9" cy="6" r="4.500" fill="none" stroke="#2f74b5" stroke-width="1.600"/><path stroke="#2f74b5" stroke-width="2" d="M6 9 1 14"/></svg>Find<i class="car"></i></button><button><svg viewBox="0 0 16 16"><path fill="#666" d="M1 11H9L15 9 10 15H1Z"/><path fill="#2f74b5" d="M1 8H9L15 6 10 12H1Z"/><path fill="#eec77c" d="M1 7 5 1H15L10 7Z"/></svg>Layers<i class="car"></i></button><button><svg><use href="#i-pointer"/></svg>Select<i class="car"></i></button></div>
    </div><h3>Editing</h3></section>
    <button class="fold" aria-label="Collapse ribbon"><svg viewBox="0 0 10 8"><path fill="none" stroke="#555" stroke-width="2" d="M1 6 5 2 9 6"/></svg></button>
  </div>
  <div class="v-body">
    <aside class="shapes">
      <div class="s-head"><h2>Shapes</h2><button aria-label="Collapse"><svg viewBox="0 0 6 10"><path fill="none" stroke="#444" stroke-width="1.500" d="M5 1 1 5 5 9"/></svg></button></div>
      <div class="s-tabs"><button class="cur">STENCILS</button><button>SEARCH</button></div>
      <ul class="s-list"><li>More Shapes <i class="more"></i></li><li>UML Sequence</li><li class="cur">UML Use Case</li><li>UML State Machine</li></ul>
      <div class="s-grid">
        <button><svg class="man" viewBox="-21 -10 42 76"><use href="#person" x="-17" y="-8" width="34" height="71"/></svg>Actor</button>
        <button><svg viewBox="0 0 36 36"><ellipse cx="18" cy="18" rx="17" ry="5"/></svg>Use Case</button>
        <button><svg viewBox="0 0 36 36"><path d="M6.500 .5H30.500V35.500H6.500ZM8 2.500H12"/></svg>Subsystem</button>
        <button><svg viewBox="0 0 36 36"><path d="M0 17.500H36"/></svg>Association</button>
        <button><svg viewBox="0 0 36 36"><path d="M0 17.500H36"/></svg>Dependency</button>
        <button><svg viewBox="0 0 36 36"><path d="M0 17.500H30V15.500L35 17.500 30 19.500V17.500"/></svg>Generalization</button>
        <button class="cur"><svg viewBox="0 0 36 36"><path fill="#fff" stroke="none" d="M8 15H28V20H8Z"/><path stroke-dasharray="5 2" d="M0 17.500H34M33 15.500 35 17.500 33 19.500"/></svg>Include</button>
        <button><svg viewBox="0 0 36 36"><path fill="#fff" stroke="none" d="M8 15H28V20H8Z"/><path stroke-dasharray="5 2" d="M0 17.500H34M33 15.500 35 17.500 33 19.500"/></svg>Extend</button>
      </div>
    </aside>
    <div class="work">
      <i class="corner"></i>
      <div class="rule-h"><span>-180</span><span>-160</span><span>-140</span><span>-120</span><span>-100</span><span>-80</span><span>-60</span><span>-40</span><span>-20</span><span>0</span><span>20</span><span>40</span><span>60</span><span>80</span><span>100</span><span>120</span><span>140</span><span>160</span><span>180</span><span>200</span><span>220</span><span>240</span><span>260</span><span>280</span><span>300</span><span>320</span><span>340</span><span>360</span><span>380</span></div>
      <div class="rule-v"><span>34</span><span>320</span><span>300</span><span>280</span><span>260</span><span>240</span><span>220</span><span>200</span><span>180</span><span>160</span><span>140</span><span>120</span><span>100</span><span>80</span><span>60</span></div>
      <div class="sheet">
        <svg class="uml right" viewBox="2240 178 1578 785">
          <path class="guide" d="M2774.500 178V963M3314.500 178V963M2240 308.500H3818"/>
          <rect x="2819.500" y="233.500" width="470" height="655" fill="#fff" class="s"/>
          <g class="n s">
            <path d="M2771 507 3029 289M2771 509 3025 334M2771 511 3016 376M2771 513 3019 415M2771 517 3031 452M2771 521.500H2889M2771 527 2906 568M2768 536 2881 652"/>
            <path d="M3227 296 3321 428M3222 344 3317 432M3066 288 3317 436M3072 332 3317 439M3067 373 3317 441M3081 411 3317 444M3089 446.500H3317M3163 487 3317 450M3175 518 3317 454M3181 557 3326 481"/>
            <path d="M3182 571 3317 594M3196 597.500H3317M3184 626 3317 600M3173 661 3317 604M3169 696 3317 608M3191 771 3317 804M3202 808.500H3317M3200 847 3317 814"/>
            <path marker-end="url(#tri)" d="M2735 694 2751 556"/><path marker-end="url(#tri)" d="M2785 694 2760 556"/>
            <g class="dash2"><path marker-end="url(#dep)" d="M3017 481 3047 454"/><path marker-end="url(#dep)" d="M3054.500 454V515"/><path marker-end="url(#dep)" d="M2920 728 2902 683"/><path marker-end="url(#dep)" d="M3098 815 3004 826"/></g>
          </g>
          <g class="o s">
            <ellipse cx="3045" cy="276" rx="46" ry="14"/><ellipse cx="3217" cy="282" rx="55" ry="14"/><ellipse cx="3045" cy="320" rx="38" ry="17"/><ellipse cx="3205" cy="329" rx="40" ry="17"/>
            <ellipse cx="3037" cy="364" rx="38" ry="14"/><ellipse cx="3045" cy="405" rx="38" ry="14"/><ellipse cx="3054" cy="446" rx="34" ry="8"/><ellipse cx="3000" cy="497" rx="38" ry="18"/>
            <ellipse cx="3054" cy="533" rx="34" ry="18"/><ellipse cx="3133" cy="493" rx="34" ry="14"/><ellipse cx="3153" cy="527" rx="55" ry="11"/><ellipse cx="3145" cy="564" rx="46" ry="11"/>
            <ellipse cx="3150" cy="597" rx="46" ry="11"/><ellipse cx="3150" cy="632" rx="38" ry="14"/><ellipse cx="3147" cy="670" rx="38" ry="14"/><ellipse cx="3148" cy="708" rx="55" ry="14"/>
            <ellipse cx="2929" cy="521" rx="39" ry="14"/><ellipse cx="2935" cy="577" rx="46" ry="11"/><ellipse cx="2895" cy="668" rx="39" ry="16"/><ellipse cx="2927" cy="744" rx="39" ry="16"/>
            <ellipse cx="3145" cy="758" rx="69" ry="17"/><ellipse cx="3148" cy="808" rx="55" ry="14"/><ellipse cx="3153" cy="859" rx="77" ry="17"/><ellipse cx="2942" cy="833" rx="69" ry="18"/>
            <use href="#person" x="2737" y="486" width="34" height="71"/><use href="#person" x="2715" y="692" width="34" height="71"/><use href="#person" x="2774" y="692" width="34" height="71"/>
            <use href="#person" x="3317" y="411" width="34" height="71"/><use href="#person" x="3317" y="561" width="34" height="71"/><use href="#person" x="3317" y="773" width="34" height="71"/>
          </g>
          <text class="cap" x="2825" y="247">Sound Strong Music</text>
          <text x="3045" y="273">Book Practise<tspan x="3045" dy="14">Room</tspan></text><text x="3217" y="286">Manage Instrument</text>
          <text x="3045" y="317">Book<tspan x="3045" dy="14">Instrument</tspan></text><text x="3205" y="326">Manage<tspan x="3205" dy="14">Practise Room</tspan></text>
          <text x="3037" y="362">Register<tspan x="3037" dy="14">Customer</tspan></text><text x="3045" y="402">De-register<tspan x="3045" dy="14">Customer</tspan></text>
          <text x="3054" y="450">Login</text><text x="3000" y="494">Display error<tspan x="3000" dy="14">message</tspan></text><text x="3054" y="530">Verify login<tspan x="3054" dy="14">detail</tspan></text>
          <text x="3133" y="490">Generate<tspan x="3133" dy="14">report</tspan></text><text x="3153" y="531">Manage Booking</text><text x="3144" y="568">Manage Payment</text><text x="3150" y="601">View Reprt</text>
          <text x="3150" y="636">Register Staff</text><text x="3147" y="668">De-register<tspan x="3147" dy="14">Staff</tspan></text><text x="3148" y="712">Manage Discount</text>
          <text x="2929" y="525">Payment</text><text x="2935" y="581">Cancel Booking</text><text x="2895" y="672">View Profile</text><text x="2927" y="748">Edit Profile</text>
          <text x="3145" y="762">Notify about discount offer</text><text x="3148" y="812">Notify Customer</text><text x="3153" y="863">Manage message automations</text>
          <text x="2942" y="831">Use Correct Customer<tspan x="2942" dy="14">Number</tspan></text>
          <g class="tiny"><text x="3031" y="470">&lt;&lt;extend&gt;&gt;</text><text x="3054" y="487">&lt;&lt;include&gt;&gt;</text><text x="2911" y="708">&lt;&lt;extend&gt;&gt;</text><text x="3052" y="823">&lt;&lt;include&gt;&gt;</text></g>
        </svg>
      </div>
      <div class="sb-v"><i>▴</i><b></b><i>▾</i></div>
      <div class="sb-h"><i>◂</i><b></b><i>▸</i></div>
      <nav class="pages"><button class="cur">Page-1</button><button>All <small>▲</small></button><button aria-label="New page"><svg viewBox="0 0 16 16"><circle cx="8" cy="8" r="7" fill="none" stroke="#666"/><path stroke="#555" stroke-width="1.500" d="M4.500 8H11.500M8 4.500V11.500"/></svg></button></nav>
    </div>
  </div>
  <div class="status">
    <span>Page 1 of 1</span><span>English (United Kingdom)</span><svg viewBox="0 0 14 14"><circle cx="3" cy="3" r="2.500" fill="#666"/><path fill="none" stroke="#777" d="M1.500 6V13.500H12.500V2.500H7M5 5.500H12M5 8.500H12M5 11.500H12M8.500 3V13"/></svg>
    <span class="push"></span>
    <button class="pres" aria-label="Presentation"><svg viewBox="0 0 14 14"><path fill="none" stroke="#666" d="M0 1.500H14M1.500 2V9.500H12.500V2M7 10V13M4 13.500H10"/></svg></button>
    <button aria-label="Zoom out">−</button><input type="range" min="0" max="100" value="36" aria-label="Zoom"><button aria-label="Zoom in">+</button><span class="pct">72%</span>
    <button class="fit" aria-label="Fit page"><svg viewBox="0 0 14 14"><path fill="none" stroke="#777" d="M1 5V1.500H5M9 1.500H13V5M13 9V13H9M5 13H1V9M7 3V6M7 8V11M3 7H6M8 7H11"/></svg></button><button class="fit" aria-label="Switch windows"><svg viewBox="0 0 14 14"><path fill="none" stroke="#777" d="M.5 1.500H6.500V6.500H.5ZM8.500 1.500H13.500V5.500H8.500ZM3.500 8.500H7.500V13.500H3.500ZM9.500 8.500H13V12.500H9.500"/></svg></button>
  </div>
  <footer class="bar small-bar">
    <button class="start" aria-label="Start"><svg><use href="#i-win"/></svg></button>
    <button aria-label="Search"><svg><use href="#i-find"/></svg></button>
    <button aria-label="Cortana"><svg><use href="#i-cortana"/></svg></button>
    <button aria-label="Task view"><svg><use href="#i-task"/></svg></button>
    <button aria-label="Files"><svg><use href="#i-folder"/></svg></button>
    <button aria-label="Mail"><svg><use href="#i-mail"/></svg><b class="badge">99+</b></button>
    <button aria-label="Chrome"><svg><use href="#i-chrome"/></svg><i class="face light"></i></button>
    <button class="run" aria-label="Chrome profile"><svg><use href="#i-chrome"/></svg><i class="face"></i></button>
    <button aria-label="Brave"><svg><use href="#i-brave"/></svg></button>
    <button class="run" aria-label="Acrobat"><svg><use href="#i-acro"/></svg></button>
    <button class="run" aria-label="Word"><svg><use href="#i-word"/></svg></button>
    <button class="run" aria-label="OneNote"><svg><use href="#i-note"/></svg></button>
    <button class="run active" aria-label="Visio"><svg><use href="#i-visio"/></svg></button>
    <span class="push"></span>
    <button aria-label="Pen"><svg><use href="#i-pen"/></svg></button>
    <time class="clock">17:43<br>30/04/2021</time>
  </footer>
</section>
</body>
</html>
```
FILE: styles.css
```css
* { box-sizing: border-box; }
body { margin: 0; display: flex; height: 100vh; overflow: hidden; font-family: "Open Sans", "Noto Sans", sans-serif; }
button, input, select { font: inherit; color: inherit; background: none; border: 0; padding: 0; margin: 0; }
button { display: inline-flex; align-items: center; justify-content: center; white-space: nowrap; }
select { appearance: none; }
h1, h2, h3, p, ul { margin: 0; padding: 0; font-weight: 400; }
ul { list-style: none; }
i { font-style: normal; }
svg { display: block; flex: none; }
.sprite { position: absolute; width: 0; height: 0; }
.push { flex: 1; }
.screen { flex: 1; min-width: 0; display: flex; flex-direction: column; }

/* Acrobat window */
.acro { background: #4d4d4d; color: #c8c8c8; }
.a-title { display: flex; align-items: center; height: 34px; padding-left: 5px; background: #2b2b2b; color: #858585; }
.a-logo { width: 18px; height: 24px; }
.a-title h1 { margin-left: 8px; font-size: 17px; line-height: 24px; }
.a-win { display: flex; margin-left: auto; color: #999; }
.a-win button { width: 70px; height: 32px; }
.a-win svg { width: 16px; height: 16px; }
.a-menu { display: flex; gap: 20px; height: 31px; padding-left: 10px; background: #3d3d3d; border-bottom: 1px solid #2b2b2b; color: #fff; font-size: 17px; }
.a-tabs { display: flex; height: 53px; background: #424242; border-bottom: 1px solid #2b2b2b; font-size: 22px; }
.a-tabs > button { padding-left: 22px; }
.a-tabs > button + button { padding: 0 40px 0 43px; }
.a-tab { display: flex; width: 270px; height: 53px; justify-content: space-between; padding: 0 13px 0 40px; background: #4d4d4d; border: 1px solid #2b2b2b; border-width: 0 1px; color: #eee; font-size: 20px; }
.tab-x { width: 10px; height: 10px; stroke-width: 3; }
.a-account { display: flex; margin-left: auto; padding-right: 9px; }
.a-account button { width: 62px; }
.a-account svg { width: 32px; height: 32px; }
.a-account .avatar { width: 36px; height: 36px; }
.a-tools { display: flex; align-items: center; height: 70px; padding: 0 6px 0 4px; border-bottom: 1px solid #333; font-size: 18px; color: #ccc; }
.a-tools button { width: 66px; height: 60px; }
.a-tools svg { width: 32px; height: 32px; }
.a-tools .gap-l { margin-left: 39px; }
.a-tools .hand { color: #4aa5ff; }
.a-tools .fitw { width: 108px; }
.a-tools .fitw svg { width: 44px; height: 36px; }
.a-tools .scrollm { width: 92px; margin-left: -22px; }
.a-sep { width: 1px; height: 42px; background: #3a3a3a; margin-right: 15px; }
.scrollm + .a-sep { margin-left: 3px; }
.pageno { display: flex; align-items: center; gap: 10px; margin-left: 15px; width: 122px; color: #eee; }
.pageno input { width: 44px; height: 40px; text-align: center; border-bottom: 1px solid #777; }
.zoom { position: relative; margin-left: 14px; color: #eee; }
.zoom select { width: 106px; height: 40px; padding-left: 13px; border-bottom: 1px solid #777; }
.zoom::after { content: ""; position: absolute; right: 12px; top: 17px; border: 5px solid transparent; border-top: 6px solid #ccc; border-bottom: 0; }
.a-body { flex: 1; min-height: 0; display: flex; }
.strip { width: 33px; background: #424242; }
.strip svg { width: 8px; height: 12px; }
.doc { flex: 1; display: flex; justify-content: center; position: relative; background: #282828; overflow: hidden; padding-right: 26px; }
.paper { width: 1402px; height: 1600px; padding: 5px 0 0 165px; background: #fff; color: #000; font-family: "Liberation Sans", Arial, sans-serif; }
.paper p { font-size: 28px; line-height: 34px; }
.paper h2 { margin-top: 18px; font-size: 30px; line-height: 34px; font-weight: 700; }
.uml { display: block; }
.uml.left { width: 1120px; height: 707px; margin: 34px 0 0 -17px; }
.uml.left .n, .uml.left .o, .uml.left .o ellipse { stroke: #222; fill: none; }
.uml.left .o ellipse { fill: #fff; }
.uml.left text { font-size: 13px; text-anchor: middle; fill: #222; }
.uml.left .big { font-size: 20px; }
.dash { stroke-dasharray: 3 3; }
.a-scroll { position: absolute; right: 0; top: 0; bottom: 0; width: 26px; padding: 11px 1px 10px; background: #161616; display: flex; flex-direction: column; align-items: center; }
.a-scroll svg { width: 12px; height: 6px; fill: none; stroke: #888; stroke-width: 2; }
.a-scroll svg:last-child { margin-top: auto; }
.a-scroll i { width: 24px; height: 26px; margin-top: 131px; background: #4f4f4f; }
.a-pane { width: 69px; display: flex; flex-direction: column; background: #4d4d4d; border-left: 1px solid #3a3a3a; overflow: hidden; }
.a-pane button { height: 69px; flex: none; }
.a-pane svg { width: 34px; height: 34px; }
.a-pane svg[viewBox="0 0 32 32"] { width: 30px; height: 30px; }
.p-sep { height: 1px; flex: none; margin: 0 13px; background: #3a3a3a; }
.teal { color: #2ac4cb; } .pink { color: #f866b3; } .coral { color: #ff7070; } .yellow { color: #ffdf23; } .violet { color: #8f8fff; } .lime { color: #94f250; }
.a-pane .cut { flex: 1; min-height: 0; align-items: flex-start; overflow: hidden; padding-top: 15px; color: #b57bee; }
.a-pane .p-more { height: 36px; background: #3a3a3a; }
.a-pane .p-more svg { width: 18px; height: 10px; }
.a-pane .p-end { height: 70px; padding-left: 6px; }
.a-pane .p-end svg { width: 20px; height: 24px; }

/* Taskbars */
.bar { display: flex; background: linear-gradient(90deg, #232640, #2a2639 40%, #35373a 52%, #282535 60%, #2d2530 80%, #2a2935); color: #fff; }
.bar button { position: relative; }
.big-bar { height: 60px; }
.big-bar > button { width: 65px; }
.big-bar svg { width: 30px; height: 30px; }
.big-bar .start { width: 72px; }
.big-bar .sys { width: 73px; }
.big-bar .start svg, .big-bar .sys svg { width: 24px; height: 24px; }
.search { display: flex; align-items: center; gap: 17px; width: 516px; padding-left: 17px; background: #333; border: 2px solid #5c5c5c; font-size: 21px; color: #ddd; }
.search svg { width: 25px; height: 25px; }
.search input { flex: 1; min-width: 0; }
.search input::placeholder, .tell input::placeholder { color: inherit; opacity: 1; }
.badge { position: absolute; left: 50%; top: 50%; padding: 0 4px; border: 1px solid #777; border-radius: 12px; background: #333338; color: #fff; font-size: 17px; line-height: 22px; font-weight: 600; }
.big-bar .badge { margin: -1px 0 0 -11px; }
.big-bar .notif .badge { margin: -1px 0 0 -3px; padding: 0 6px; font-size: 15px; }
.face { position: absolute; left: 50%; top: 50%; margin: 1px 0 0 2px; width: 15px; height: 15px; border-radius: 50%; background: #33333b; border: 1px solid #555; }
.face.light { background: radial-gradient(circle, #2f6350 30%, #e6e6e6 36%); }
.run::after { content: ""; position: absolute; left: 7px; right: 7px; bottom: 0; height: 3px; background: #90a8d0; }
.active { background: #53525f; }
.active::after { left: 0; right: 0; }
.tray { display: flex; align-items: center; }
.tray button { width: 49px; height: 60px; }
.tray svg { width: 24px; height: 24px; fill: none; stroke: #fff; stroke-width: 1.500px; }
.lang { align-self: center; margin-left: 15px; font-size: 18px; }
.clock { align-self: center; text-align: center; }
.big-bar .clock { margin-left: 17px; font-size: 18px; line-height: 28px; }
.big-bar .notif { width: 84px; border-right: 1px solid #777; margin-right: 6px; padding-right: 6px; }
.big-bar .notif svg { width: 26px; height: 26px; }
.small-bar { height: 40px; padding-right: 6px; font-size: 12px; }
.small-bar > button { width: 49px; }
.small-bar svg { width: 21px; height: 21px; }
.small-bar .start svg { width: 16px; height: 16px; }
.small-bar button:nth-child(-n+4) svg { width: 16px; height: 16px; }
.small-bar .badge { margin: 0 0 0 -6px; padding: 0 2px; font-size: 11px; line-height: 13px; }
.small-bar .face { width: 11px; height: 11px; }
.small-bar .clock { line-height: 20px; }

/* Visio window */
.visio { background: #eaeaea; color: #444; font-size: 11px; }
.v-head { background: #3a55a4; color: #fff; }
.v-title { display: grid; grid-template-columns: 1fr auto 1fr; align-items: center; height: 33px; }
.v-title h1 { font-size: 11px; }
.qat { display: flex; align-items: center; padding-left: 19px; gap: 12px; }
.qat button { gap: 5px; }
.qat svg { width: 16px; height: 16px; }
.car { display: inline-block; border: 3px solid transparent; border-top-color: currentColor; border-bottom: 0; margin-left: 3px; }
.v-win { display: flex; justify-content: flex-end; }
.v-win button { width: 47px; height: 32px; }
.v-win svg, .docx svg { width: 11px; height: 11px; }
.v-tabs { display: flex; height: 24px; }
.v-tabs button { padding: 0 10px; }
.v-tabs .file { width: 63px; padding: 0 14px 0 0; }
.v-tabs .cur { background: #f1f1f1; color: #3a55a4; }
.tell { display: flex; align-items: center; gap: 5px; flex: 1; margin-left: 9px; color: #c5cfee; }
.tell svg { width: 12px; height: 16px; }
.tell input { width: 190px; }
.v-tabs .docx { width: 46px; }
.ribbon { position: relative; display: flex; height: 88px; background: #f1f1f1; border-bottom: 1px solid #d4d4d4; }
.g { display: flex; flex-direction: column; padding-top: 3px; border-right: 1px solid #dcdcdc; }
.g .in { flex: 1; min-height: 0; display: flex; }
.g h3 { position: relative; font-size: 11px; line-height: 14px; text-align: center; color: #666; }
.launch { position: absolute; right: 4px; top: 4px; width: 8px; height: 8px; }
.clip { width: 146px; padding-left: 2px; } .font { width: 199px; } .para { width: 133px; } .tools { width: 123px; } .styles { width: 483px; } .arr { width: 199px; } .edit { width: 114px; }
.tall { flex-direction: column; justify-content: flex-start; width: 40px; line-height: 18px; padding-top: 2px; }
.tall svg { width: 28px; height: 30px; margin-bottom: 1px; }
.tall span { line-height: 14px; }
.tall > .car { margin: 4px 0 0; }
.tall.pos { width: 47px; }
.stack { display: flex; flex-direction: column; }
.stack button { justify-content: flex-start; height: 21px; gap: 2px; padding: 0 3px 0 1px; }
.stack svg, .sq svg { width: 16px; height: 16px; }
.clip .stack { padding: 1px 0 0 2px; } .clip .stack button { height: 22px; }
.ribbon .on { background: #c6c6c6; }
.off { color: #a6a6a6; }
.col { flex-direction: column; gap: 9px; padding: 7px 0 0 4px; }
.row { display: flex; align-items: center; height: 21px; }
.sel { position: relative; font-size: 12px; }
.sel select { height: 20px; border: 1px solid #c6c6c6; background: #fff; padding: 0 2px; }
.sel::after { content: ""; position: absolute; right: 5px; top: 9px; border: 3px solid transparent; border-top-color: #666; border-bottom: 0; }
.face-sel select { width: 104px; } .size-sel select { width: 48px; border-left: 0; }
.sq { width: 20px; height: 21px; font-size: 13px; }
.sq.gl { font-size: 15px; }
.sq sup { font-size: 8px; color: #2f74b5; line-height: 8px; align-self: flex-start; }
.sq b { font-weight: 800; }
.ital { font-style: italic; } .und { text-decoration: underline; } .strike { text-decoration: line-through; font-size: 10px; }
.sq.wd { width: 29px; }
.red { border-bottom: 4px solid #f00; line-height: 13px; padding: 0 3px; }
.bar-v { width: 1px; height: 18px; margin: 0 3px; background: #d4d4d4; }
.sq .half { height: 8px; }
.sq.top { align-items: flex-start; } .sq.bot { align-items: flex-end; }
.tools .in { padding-left: 2px; } .tools .stack:first-child { width: 88px; }
.styles .in { padding: 1px 0 0 3px; gap: 8px; }
.gallery { display: grid; grid-template-columns: repeat(7, 47px) 15px; column-gap: 9px; width: 408px; height: 60px; padding: 5px 0 5px 4px; background: #fff; border: 1px solid #c6c6c6; }
.gallery button { padding: 10px 7px 11px; background: #f4f1f8; }
.gallery button::before { content: ""; flex: 1; align-self: stretch; border: 1px solid #999; border-width: 0 0 1px 1px; }
.gs { display: grid; margin: -5px 0 -5px -3px; border-left: 1px solid #d4d4d4; background: #f1f1f1; text-align: center; font-size: 8px; color: #aaa; }
.gs i { display: grid; place-items: center; border-top: 1px solid #d4d4d4; }
.arr .in { padding-left: 3px; } .arr .stack { padding-left: 1px; }
.edit .in { padding-left: 3px; } .edit .stack { padding-left: 8px; }
.fold { position: absolute; right: 6px; bottom: 4px; }
.fold svg { width: 10px; height: 8px; }
.v-body { flex: 1; min-height: 0; display: flex; }
.shapes { width: 303px; padding: 24px 0 0 6px; color: #555; }
.s-head { display: flex; align-items: center; justify-content: space-between; padding: 0 17px 0 4px; }
.s-head h2 { font-size: 20px; line-height: 26px; color: #3a55a4; }
.s-head svg { width: 6px; height: 10px; }
.s-tabs { display: flex; margin: 5px 0 0 2px; line-height: 16px; font-size: 12px; }
.s-tabs .cur { padding-right: 15px; margin-right: 15px; border-right: 1px solid #ccc; font-weight: 700; color: #3a55a4; }
.s-list { margin: 15px 0 0; width: 269px; line-height: 24px; padding-bottom: 11px; }
.s-list li { padding-left: 2px; }
.s-list .cur, .s-grid .cur { background: #c3cdf2; }
.s-list .cur { font-weight: 700; color: #444; }
.more { display: inline-block; margin-left: 14px; border: 4px solid transparent; border-left: 5px solid #666; border-right: 0; }
.s-grid { display: grid; grid-template-columns: 128px 134px; column-gap: 6px; grid-template-rows: 64px 50px 32px 46px; row-gap: 8px; margin-right: 20px; padding: 2px 0 0 4px; border-top: 1px solid #ddd; }
.s-grid button { justify-content: flex-start; gap: 6px; padding-left: 3px; min-height: 0; }
.s-grid svg { width: 36px; height: 36px; fill: #fff; stroke: #555; }
.s-grid .man { stroke-width: 2; }
.work { flex: 1; min-width: 0; display: grid; grid-template: 16px 1fr 17px 39px / 17px 1fr 22px; padding-top: 17px; }
.corner { border-bottom: 1px solid #bbb; background: #eee; }
.rule-h { display: grid; grid-template-columns: repeat(28, 1fr) 0; padding: 0 21px 0 25px; border-bottom: 1px solid #bbb; font-size: 10px; line-height: 13px; color: #666; }
.rule-h span { position: relative; padding-left: 1px; border-left: 1px solid #bbb; min-width: 0; }
.rule-h span:not(:last-child)::after { content: ""; position: absolute; left: 50%; top: 4px; bottom: 0; border-left: 1px solid #bbb; }
.rule-v { display: grid; grid-template-rows: 50px repeat(13, 1fr) 24px; min-height: 0; border-right: 1px solid #ccc; font-size: 10px; color: #666; overflow: hidden; }
.rule-v span { position: relative; writing-mode: vertical-rl; transform: rotate(180deg); text-align: right; line-height: 15px; padding-bottom: 1px; border-bottom: 1px solid #bbb; min-height: 0; }
.rule-v span:first-child { border: 0; }
.rule-v span:not(:last-child)::after { content: ""; position: absolute; top: 27px; left: 0; width: 11px; border-top: 1px solid #bbb; }
.sheet { background: #fff; overflow: hidden; min-height: 0; }
.uml.right { width: 1578px; height: 785px; font-family: Lato, Carlito, sans-serif; }
.guide { stroke: #d0d0d0; stroke-dasharray: 6 3; fill: none; }
.s { stroke: #444; } .uml.right .n { fill: none; } .uml.right .o { fill: #fff; }
.uml.right text { font-size: 11px; text-anchor: middle; fill: #222; }
.uml.right .cap { font-size: 10px; text-anchor: start; }
.uml.right .tiny text { font-size: 7px; paint-order: stroke; stroke: #fff; stroke-width: 3px; }
.dash2 { stroke-dasharray: 5 3; }
.sb-v { grid-area: 1 / 3 / 3 / 4; display: flex; flex-direction: column; justify-content: space-between; width: 17px; margin-left: 1px; background: #dedede; }
.sb-v i, .sb-h i { display: grid; place-items: center; flex: none; width: 16px; height: 16px; background: #fff; border: 1px solid #ccc; font-size: 9px; }
.sb-v b { height: 164px; margin: 356px 0 auto; background: #fff; border: 1px solid #bbb; }
.sb-h { grid-area: 3 / 1 / 4 / 3; display: flex; background: #dedede; }
.sb-h i { height: 17px; }
.sb-h b { width: 524px; background: #fff; border: 1px solid #bbb; margin: 0 auto 0 513px; }
.pages { grid-area: 4 / 1 / 5 / 3; display: flex; align-items: center; height: 39px; padding-left: 14px; }
.pages button { height: 22px; padding: 0 14px 0 0; margin-right: 14px; border-right: 1px solid #d8d8d8; }
.pages button:last-child { border: 0; }
.pages .cur { font-weight: 700; color: #3a55a4; }
.pages small { font-size: 7px; margin-left: 6px; }
.pages svg { width: 16px; height: 16px; }
.status { display: flex; align-items: center; height: 21px; padding: 0 6px; gap: 15px; background: #f1f1f1; border-top: 1px solid #d4d4d4; font-size: 10px; color: #555; }
.status svg { width: 14px; height: 14px; }
.status .pres { width: 28px; height: 20px; background: #b5b5b5; margin-right: -10px; }
.status > button { margin-right: -10px; font-size: 16px; }
.status input { appearance: none; width: 100px; height: 14px; margin-right: -10px; background: linear-gradient(#aaa, #aaa) center / 100% 1px no-repeat; }
.status input::-webkit-slider-thumb { appearance: none; width: 4px; height: 12px; background: #555; }
.status .pct { margin-left: 8px; }
.status .fit { margin-right: -6px; }
```
